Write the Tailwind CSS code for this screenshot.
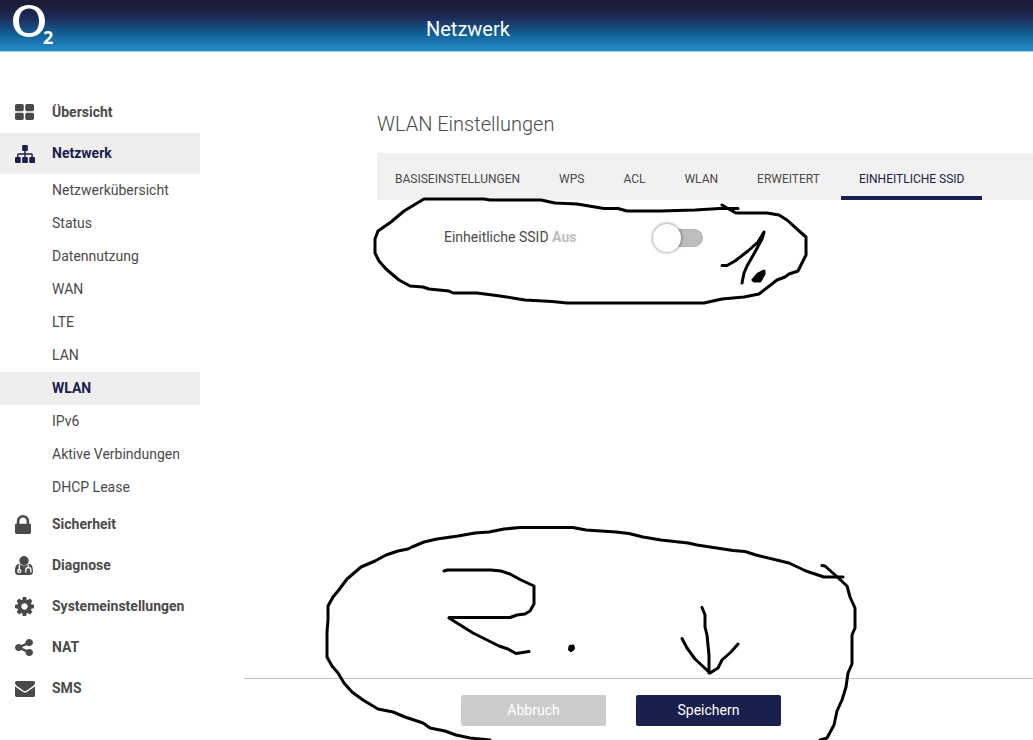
<!DOCTYPE html>
<html lang="de">
<head>
<meta charset="utf-8">
<meta name="viewport" content="width=device-width, initial-scale=1">
<title>Netzwerk – WLAN Einstellungen</title>
<script src="https://cdn.jsdelivr.net/npm/@tailwindcss/browser@4"></script>
</head>
<body class="relative flex min-h-screen flex-col overflow-x-hidden bg-white font-['Roboto',sans-serif] text-sm text-[#4a4a4a]">

<header class="flex h-[52px] shrink-0 items-start border-b border-[#a9d0e6] bg-[linear-gradient(#1c1c38_8%,#1f2b58_35%,#115f96_66%,#2389c1_95%)]">
  <a href="#" aria-label="O2" class="w-[426px] shrink-0 pl-3">
    <svg class="h-12 w-11" viewBox="0 0 44 48" fill="#fff">
      <path fill-rule="evenodd" d="M17 5C26.500 5 33 11.500 33 21S26.500 37 17 37S1 30.500 1 21S7.500 5 17 5ZM17 8.500C10.500 8.500 7 13.500 7 21S10.500 33.300 17 33.300S27 28.500 27 21S23.500 8.500 17 8.500Z"/>
      <text x="31" y="43.500" font-family="Open Sans, sans-serif" font-weight="700" font-size="18">2</text>
    </svg>
  </a>
  <h1 class="pt-[15px] text-xl leading-7 text-white">Netzwerk</h1>
</header>

<div class="flex grow">
  <nav class="w-[200px] shrink-0 pt-10" aria-label="Hauptmenü">
    <ul class="font-bold">
      <li><a href="#" class="flex h-[41px] items-center pb-0.5 pl-[15px]"><span class="flex w-[37px]"><svg class="h-4 w-[19px]" viewBox="64 128 1664 1408" preserveAspectRatio="none" fill="currentColor"><path d="M832 1024v384q0 52-38 90t-90 38h-512q-52 0-90-38t-38-90v-384q0-52 38-90t90-38h512q52 0 90 38t38 90zm0-768v384q0 52-38 90t-90 38h-512q-52 0-90-38t-38-90v-384q0-52 38-90t90-38h512q52 0 90 38t38 90zm896 768v384q0 52-38 90t-90 38h-512q-52 0-90-38t-38-90v-384q0-52 38-90t90-38h512q52 0 90 38t38 90zm0-768v384q0 52-38 90t-90 38h-512q-52 0-90-38t-38-90v-384q0-52 38-90t90-38h512q52 0 90 38t38 90z"/></svg></span>Übersicht</a></li>
      <li>
        <a href="#" class="flex h-[41px] items-center bg-[#eeeeee] pb-0.5 pl-[15px] text-[#1a204d]"><span class="flex w-[37px] pt-0.5"><svg class="h-[18px] w-5" viewBox="0 128 1792 1536" preserveAspectRatio="none" fill="currentColor"><path d="M1792 1248v320q0 40-28 68t-68 28h-320q-40 0-68-28t-28-68v-320q0-40 28-68t68-28h96v-192h-512v192h96q40 0 68 28t28 68v320q0 40-28 68t-68 28h-320q-40 0-68-28t-28-68v-320q0-40 28-68t68-28h96v-192h-512v192h96q40 0 68 28t28 68v320q0 40-28 68t-68 28h-320q-40 0-68-28t-28-68v-320q0-40 28-68t68-28h96v-192q0-52 38-90t90-38h512v-192h-96q-40 0-68-28t-28-68v-320q0-40 28-68t68-28h320q40 0 68 28t28 68v320q0 40-28 68t-68 28h-96v192h512q52 0 90 38t38 90v192h96q40 0 68 28t28 68z"/></svg></span>Netzwerk</a>
        <ul class="font-normal">
          <li><a href="#" class="flex h-[33px] items-center pb-0.5 pl-[52px]">Netzwerkübersicht</a></li>
          <li><a href="#" class="flex h-[33px] items-center pb-0.5 pl-[52px]">Status</a></li>
          <li><a href="#" class="flex h-[33px] items-center pb-0.5 pl-[52px]">Datennutzung</a></li>
          <li><a href="#" class="flex h-[33px] items-center pb-0.5 pl-[52px]">WAN</a></li>
          <li><a href="#" class="flex h-[33px] items-center pb-0.5 pl-[52px]">LTE</a></li>
          <li><a href="#" class="flex h-[33px] items-center pb-0.5 pl-[52px]">LAN</a></li>
          <li><a href="#" aria-current="page" class="flex h-[33px] items-center bg-[#eeeeee] pb-0.5 pl-[52px] font-bold text-[#1a204d]">WLAN</a></li>
          <li><a href="#" class="flex h-[33px] items-center pb-0.5 pl-[52px]">IPv6</a></li>
          <li><a href="#" class="flex h-[33px] items-center pb-0.5 pl-[52px]">Aktive Verbindungen</a></li>
          <li><a href="#" class="flex h-[33px] items-center pb-0.5 pl-[52px]">DHCP Lease</a></li>
        </ul>
      </li>
      <li><a href="#" class="flex h-[41px] items-center pb-0.5 pl-[15px]"><span class="flex w-[37px] pt-0.5"><svg class="h-[19px] w-4" viewBox="320 128 1152 1408" preserveAspectRatio="none" fill="currentColor"><path d="M640 768h512v-192q0-106-75-181t-181-75-181 75-75 181v192zm832 96v576q0 40-28 68t-68 28h-960q-40 0-68-28t-28-68v-576q0-40 28-68t68-28h32v-192q0-184 132-316t316-132 316 132 132 316v192h32q40 0 68 28t28 68z"/></svg></span>Sicherheit</a></li>
      <li><a href="#" class="flex h-[41px] items-center pb-0.5 pl-[15px]"><span class="flex w-[37px] pt-0.5"><svg class="h-[19px] w-[18px]" viewBox="0 0 18 19" fill="none"><circle cx="9" cy="4.800" r="4.700" fill="currentColor"/><path fill="currentColor" d="M4 7.500C1 8.300 0 11 0 15.500C0 18 1.300 19 3.500 19H14.500C16.700 19 18 18 18 15.500C18 11 17 8.300 14 7.500C11 10.500 7 10.500 4 7.500Z"/><path stroke="#fff" stroke-width="1.300" d="M4.300 8.500V13.500M13.400 8.500V11.500M10.800 16.500V13.800C10.800 12.300 11.800 11.500 13.300 11.500S15.900 12.300 15.900 13.800V16.500"/><circle cx="4.300" cy="15" r="1.500" stroke="#fff" stroke-width="1.300"/></svg></span>Diagnose</a></li>
      <li><a href="#" class="flex h-[41px] items-center pb-0.5 pl-[15px]"><span class="flex w-[37px] pt-0.5"><svg class="size-[19px]" viewBox="128 128 1536 1536" fill="currentColor"><path d="M1152 896q0-106-75-181t-181-75-181 75-75 181 75 181 181 75 181-75 75-181zm512-109v222q0 12-8 23t-20 13l-185 28q-19 54-39 91 35 50 107 138 10 12 10 25t-9 23q-27 37-99 108t-94 71q-12 0-26-9l-138-108q-44 23-91 38-16 136-29 186-7 28-36 28h-222q-14 0-24.500-8.500t-11.500-21.500l-28-184q-49-16-90-37l-141 107q-10 9-25 9-14 0-25-11-126-114-165-168-7-10-7-23 0-12 8-23 15-21 51-66.500t54-70.500q-27-50-41-99l-183-27q-13-2-21-12.500t-8-23.500v-222q0-12 8-23t19-13l186-28q14-46 39-92-40-57-107-138-10-12-10-24 0-10 9-23 26-36 98.500-107.500t94.500-71.500q13 0 26 10l138 107q44-23 91-38 16-136 29-186 7-28 36-28h222q14 0 24.500 8.500t11.500 21.500l28 184q49 16 90 37l142-107q9-9 24-9 13 0 25 10 129 119 165 170 7 8 7 22 0 12-8 23-15 21-51 66.500t-54 70.500q26 50 41 98l183 28q13 2 21 12.500t8 23.500z"/></svg></span>Systemeinstellungen</a></li>
      <li><a href="#" class="flex h-[41px] items-center pb-0.5 pl-[15px]"><span class="flex w-[37px] pt-0.5"><svg class="h-[17px] w-[18px]" viewBox="128 128 1536 1536" preserveAspectRatio="none" fill="currentColor"><path d="M1344 1024q133 0 226.500 93.500t93.500 226.500-93.500 226.500-226.500 93.500-226.500-93.500-93.500-226.500q0-12 2-34l-360-180q-92 86-218 86-133 0-226.500-93.500t-93.500-226.500 93.500-226.500 226.500-93.500q126 0 218 86l360-180q-2-22-2-34 0-133 93.500-226.500t226.500-93.500 226.500 93.500 93.500 226.500-93.500 226.500-226.500 93.500q-126 0-218-86l-360 180q2 22 2 34t-2 34l360 180q92-86 218-86z"/></svg></span>NAT</a></li>
      <li><a href="#" class="flex h-[41px] items-center pb-0.5 pl-[15px]"><span class="flex w-[37px] pt-0.5"><svg class="h-4 w-5" viewBox="0 256 1792 1408" preserveAspectRatio="none" fill="currentColor"><path d="M1792 710v794q0 66-47 113t-113 47h-1472q-66 0-113-47t-47-113v-794q44 49 101 87 362 246 497 345 57 42 92.500 65.500t94.500 48 110 24.500h2q51 0 110-24.500t94.500-48 92.500-65.500q170-123 498-345 57-39 100-87zm0-294q0 79-49 151t-122 123q-376 261-468 325-10 7-42.500 31t-54 38.500-52 32.500-57.500 27-50 9h-2q-23 0-50-9t-57.500-27-52-32.500-54-38.500-42.500-31q-91-64-262-182.500t-205-142.500q-62-42-117-115.500t-55-136.500q0-78 41.500-130t118.500-52h1472q65 0 112.500 47t47.500 113z"/></svg></span>SMS</a></li>
    </ul>
  </nav>

  <main class="ml-11 flex min-w-0 grow flex-col">
    <section class="pl-[133px] pt-[58px]">
      <h2 class="text-xl font-light leading-7">WLAN Einstellungen</h2>
      <div role="tablist" class="mt-[15px] flex h-[47px] gap-[3px] whitespace-nowrap bg-[#f1f1f1] text-xs">
        <button role="tab" class="border-b-4 border-transparent px-[18px] pt-2">BASISEINSTELLUNGEN</button>
        <button role="tab" class="border-b-4 border-transparent px-[18px] pt-2">WPS</button>
        <button role="tab" class="border-b-4 border-transparent px-[18px] pt-2">ACL</button>
        <button role="tab" class="border-b-4 border-transparent px-[18px] pt-2">WLAN</button>
        <button role="tab" class="border-b-4 border-transparent px-[18px] pt-2">ERWEITERT</button>
        <button role="tab" aria-selected="true" class="border-b-4 border-[#1a204d] px-[18px] pt-2 text-[#1a204d]">EINHEITLICHE SSID</button>
      </div>
      <div class="flex items-start pl-[67px] pt-6">
        <label for="ssid" class="w-[209px] pt-[3px]">Einheitliche SSID <b class="text-[#bdbdbd]">Aus</b></label>
        <span class="relative flex h-7 w-[50px] items-center">
          <input id="ssid" type="checkbox" role="switch" class="peer ml-1 h-[18px] w-[46px] appearance-none rounded-full border border-[#b0b0b0] bg-[#bdbdbd]">
          <span class="pointer-events-none absolute left-0 top-0 size-7 rounded-full bg-white shadow-[0_0_3px_1px_rgba(0,0,0,0.35)] peer-checked:left-6"></span>
        </span>
      </div>
    </section>
    <footer class="mt-auto flex h-[62px] gap-[30px] border-t border-[#c4c4c4] pl-[217px] pt-4">
      <button class="h-[31px] w-[145px] rounded-xs bg-[#cccccc] pb-0.5 text-white">Abbruch</button>
      <button class="h-[31px] w-[145px] rounded-xs bg-[#1a204d] pb-0.5 text-white">Speichern</button>
    </footer>
  </main>
</div>

<!-- Hand-drawn step markers -->
<svg class="pointer-events-none absolute left-0 top-0 h-[740px] w-[1033px]" viewBox="0 0 1033 740" fill="none" stroke="#000" stroke-width="3" stroke-linecap="round" stroke-linejoin="round" aria-hidden="true">
  <path d="M738 208.500H720L695 210L660 211H627L618 208.500H604L577 204L555 203L541 200H490L484 199H424L404 211L391 222L378 231L375 239V253L379 261L386 269L399 280L410 286L423 287L429 289L449 291L453 293H477L500 296L525 300L552 301.500L567 303H704L722 299L744 297L759 294L777 280L785 277L789 274L798 271L806 255V237L798 230L787 220L779 215L767 213H736L727 208L722 205"/>
  <path d="M722 265.500H727L735 261L748 251L758 242L764 232M764 232L762 239L755 252L747 266L744 273L742 283"/>
  <path fill="#000" d="M764 271L758 274L753 280L754 281H760L764 274Z"/>
  <path d="M843 577H824L806 571L789 563L756 555L745 551.500L733 550.500L697 545L688 543L661 540L643 537L629 533.500L616 532L586 530L573 527.500H520L504 529L489 532L475 533L458 536L437 539L424 542L412 547L408 549L398 551L386 555L375 561L361 567L347 579L338 591L333 597L328 606V620L327 632V657L332 666L338 673L344 683L352 692L363 700L378 709L393 712L405 717L414 720L423 723L430 728L445 731L456 735L470 738L490 740"/>
  <path d="M822 565.500L825 566L834 574L847 586L850 597L855 608V628L852 635V664L848 673L846 687L842 700L837 711L834 725L827 738L820 740"/>
  <path d="M444 571L447 570H491L501 571L510 574L521 580L534 586V604L530 611L525 614L517 615L510 617.500H449M449 618L473 633L499 646L508 649L516 653.500L529 651.500"/>
  <path fill="#000" d="M570 646.500L573 646L573.500 648.500L571 650.500L569.500 649.500Z"/>
  <path d="M702 607.500L705 615V627L707 635L709 655V673M682 638.500L687 648L695 659L710 673L718 668L722 660L731 652L738 644"/>
</svg>
</body>
</html>
